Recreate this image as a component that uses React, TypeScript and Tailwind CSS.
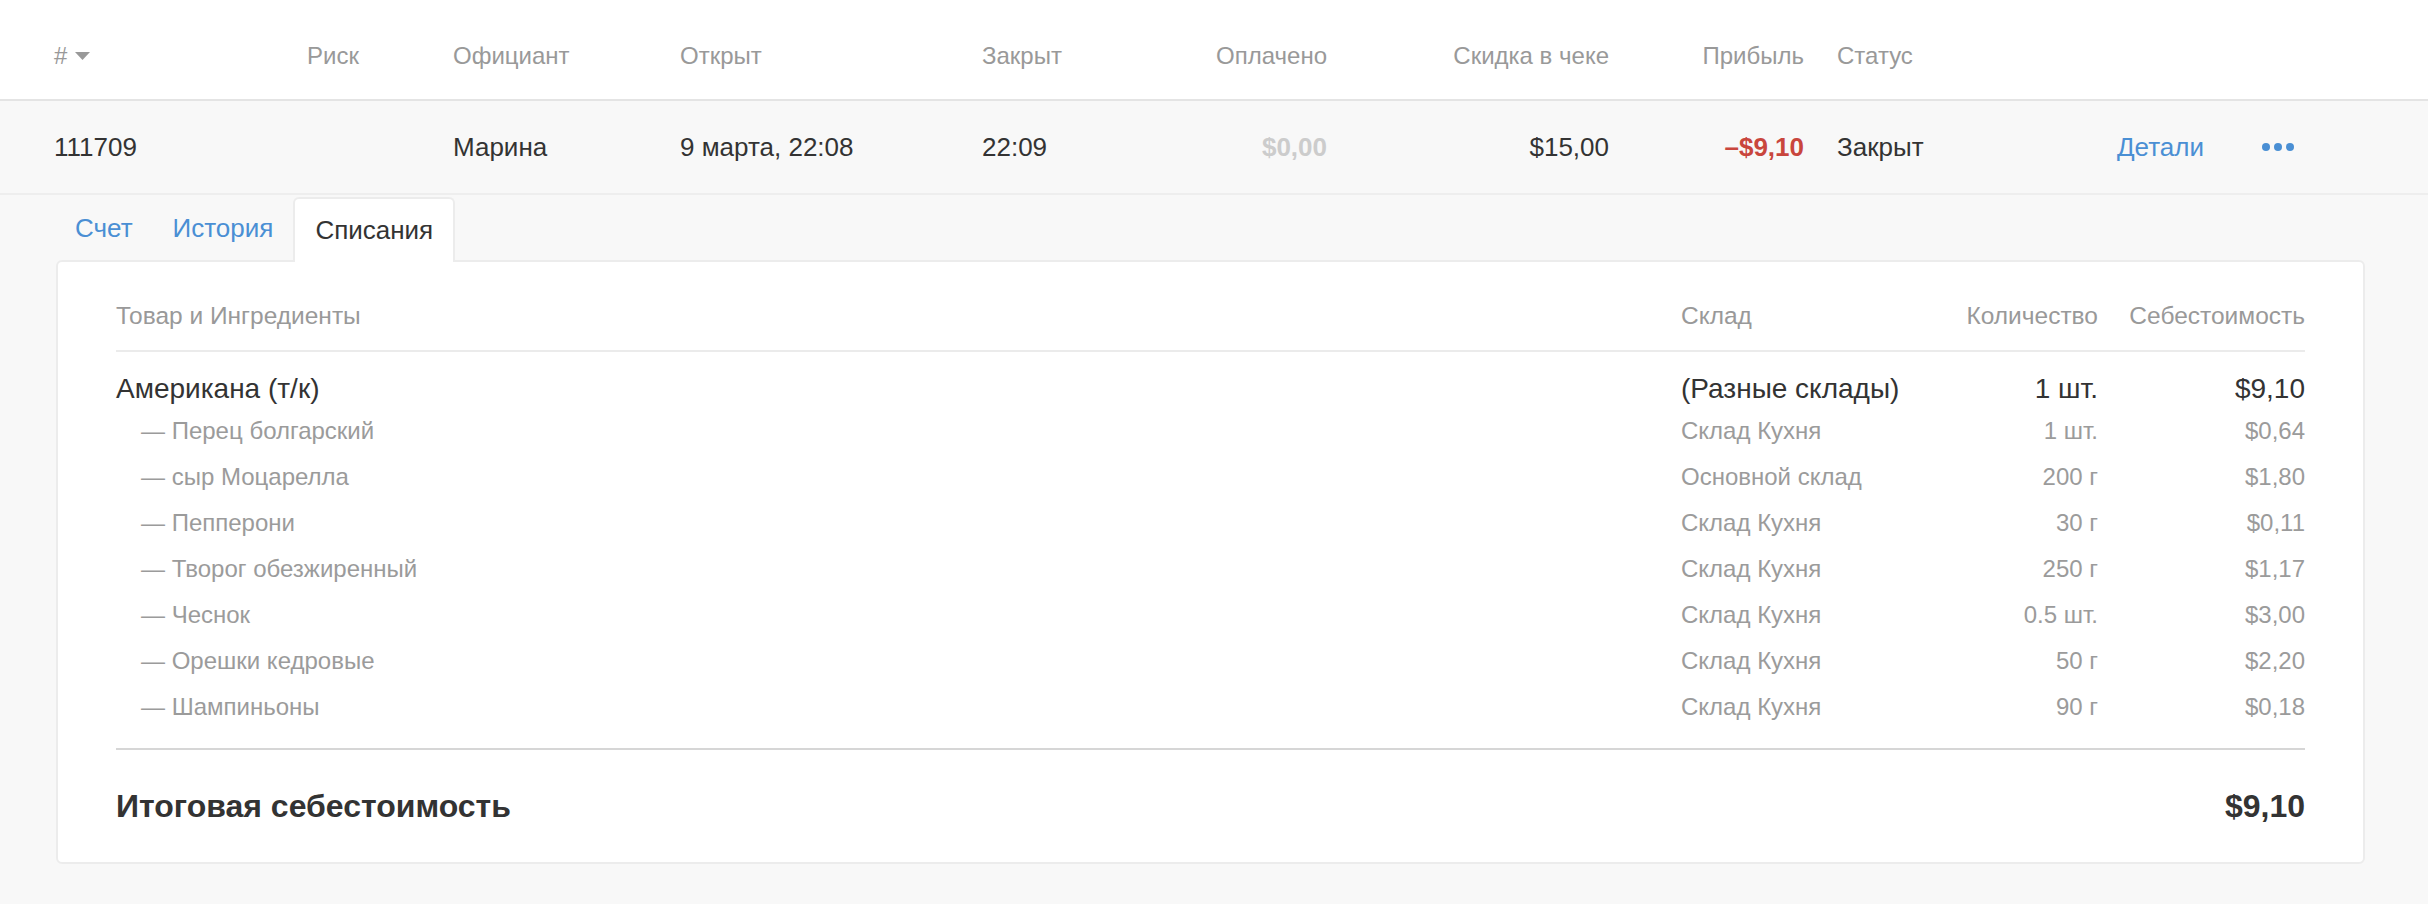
import React from "react";

const items = [
  { name: "Перец болгарский", store: "Склад Кухня", qty: "1 шт.", cost: "$0,64" },
  { name: "сыр Моцарелла", store: "Основной склад", qty: "200 г", cost: "$1,80" },
  { name: "Пепперони", store: "Склад Кухня", qty: "30 г", cost: "$0,11" },
  { name: "Творог обезжиренный", store: "Склад Кухня", qty: "250 г", cost: "$1,17" },
  { name: "Чеснок", store: "Склад Кухня", qty: "0.5 шт.", cost: "$3,00" },
  { name: "Орешки кедровые", store: "Склад Кухня", qty: "50 г", cost: "$2,20" },
  { name: "Шампиньоны", store: "Склад Кухня", qty: "90 г", cost: "$0,18" },
];

export default function App() {
  return (
    <div className="min-h-[904px] bg-[#f8f8f8] font-['Liberation_Sans',Arial,sans-serif]">
      {/* table header */}
      <div className="flex h-[101px] items-center border-b-2 border-[#e4e4e4] bg-white pt-[12px] text-[24px] text-[#999999]">
        <div className="flex w-[290px] items-center gap-[8px] pl-[54px]">
          <span>#</span>
          <svg width="15" height="8" viewBox="0 0 15 8" className="mt-[1px]">
            <polygon points="0,0 15,0 7.5,8" fill="#999999" />
          </svg>
        </div>
        <div className="w-[146px] pl-[17px]">Риск</div>
        <div className="w-[227px] pl-[17px]">Официант</div>
        <div className="w-[302px] pl-[17px]">Открыт</div>
        <div className="w-[185px] pl-[17px]">Закрыт</div>
        <div className="w-[194px] pr-[17px] text-right">Оплачено</div>
        <div className="w-[282px] pr-[17px] text-right">Скидка в чеке</div>
        <div className="w-[195px] pr-[17px] text-right">Прибыль</div>
        <div className="w-[279px] pl-[16px]">Статус</div>
        <div className="w-[145px]"></div>
        <div className="flex-1"></div>
      </div>

      {/* data row */}
      <div className="flex h-[94px] items-center border-b-2 border-[#eeeeee] bg-[#f8f8f8] text-[26px] text-[#333333]">
        <div className="w-[290px] pl-[54px]">111709</div>
        <div className="w-[146px] pl-[17px]"></div>
        <div className="w-[227px] pl-[17px]">Марина</div>
        <div className="w-[302px] pl-[17px]">9 марта, 22:08</div>
        <div className="w-[185px] pl-[17px]">22:09</div>
        <div className="w-[194px] pr-[17px] text-right font-bold text-[#cccccc]">$0,00</div>
        <div className="w-[282px] pr-[17px] text-right">$15,00</div>
        <div className="w-[195px] pr-[17px] text-right font-bold text-[#c9463d]">–$9,10</div>
        <div className="w-[279px] pl-[16px]">Закрыт</div>
        <div className="w-[145px] pl-[17px] text-[#4a8fd4]">Детали</div>
        <div className="flex flex-1 items-center gap-[4px] pl-[17px]">
          <span className="block h-[8px] w-[8px] rounded-full bg-[#4a8fd4]"></span>
          <span className="block h-[8px] w-[8px] rounded-full bg-[#4a8fd4]"></span>
          <span className="block h-[8px] w-[8px] rounded-full bg-[#4a8fd4]"></span>
        </div>
      </div>

      {/* tabs */}
      <div className="flex h-[65px] items-end pl-[55px]">
        <div className="flex h-[63px] items-center px-[20px] text-[26px] text-[#4a8fd4]">Счет</div>
        <div className="flex h-[63px] items-center px-[20px] text-[26px] text-[#4a8fd4]">История</div>
        <div className="relative z-10 -mb-[2px] flex h-[65px] items-center rounded-t-[6px] border-2 border-b-0 border-[#ececec] bg-white px-[20px] text-[26px] text-[#333333]">
          Списания
        </div>
      </div>

      {/* card */}
      <div className="ml-[56px] mr-[63px] rounded-[6px] border-2 border-[#ececec] bg-white px-[58px]">
        <div className="grid h-[90px] grid-cols-[1fr_260px_157px_207px] items-center border-b-2 border-[#ebebeb] pt-[20px] text-[24.5px] text-[#999999]">
          <div>Товар и Ингредиенты</div>
          <div>Склад</div>
          <div className="text-right">Количество</div>
          <div className="text-right">Себестоимость</div>
        </div>

        <div className="mt-[16px] grid h-[40px] grid-cols-[1fr_260px_157px_207px] items-center text-[28px] text-[#333333]">
          <div>Американа (т/к)</div>
          <div>(Разные склады)</div>
          <div className="text-right">1 шт.</div>
          <div className="text-right">$9,10</div>
        </div>

        {items.map((it) => (
          <div
            key={it.name}
            className="grid h-[46px] grid-cols-[1fr_260px_157px_207px] items-center text-[24px] text-[#9b9b9b]"
          >
            <div className="pl-[25px]">— {it.name}</div>
            <div>{it.store}</div>
            <div className="text-right">{it.qty}</div>
            <div className="text-right">{it.cost}</div>
          </div>
        ))}

        <div className="mt-[18px] flex h-[114px] items-center justify-between border-t-2 border-[#d6d6d6] text-[32px] font-bold text-[#333333]">
          <div>Итоговая себестоимость</div>
          <div>$9,10</div>
        </div>
      </div>
    </div>
  );
}
